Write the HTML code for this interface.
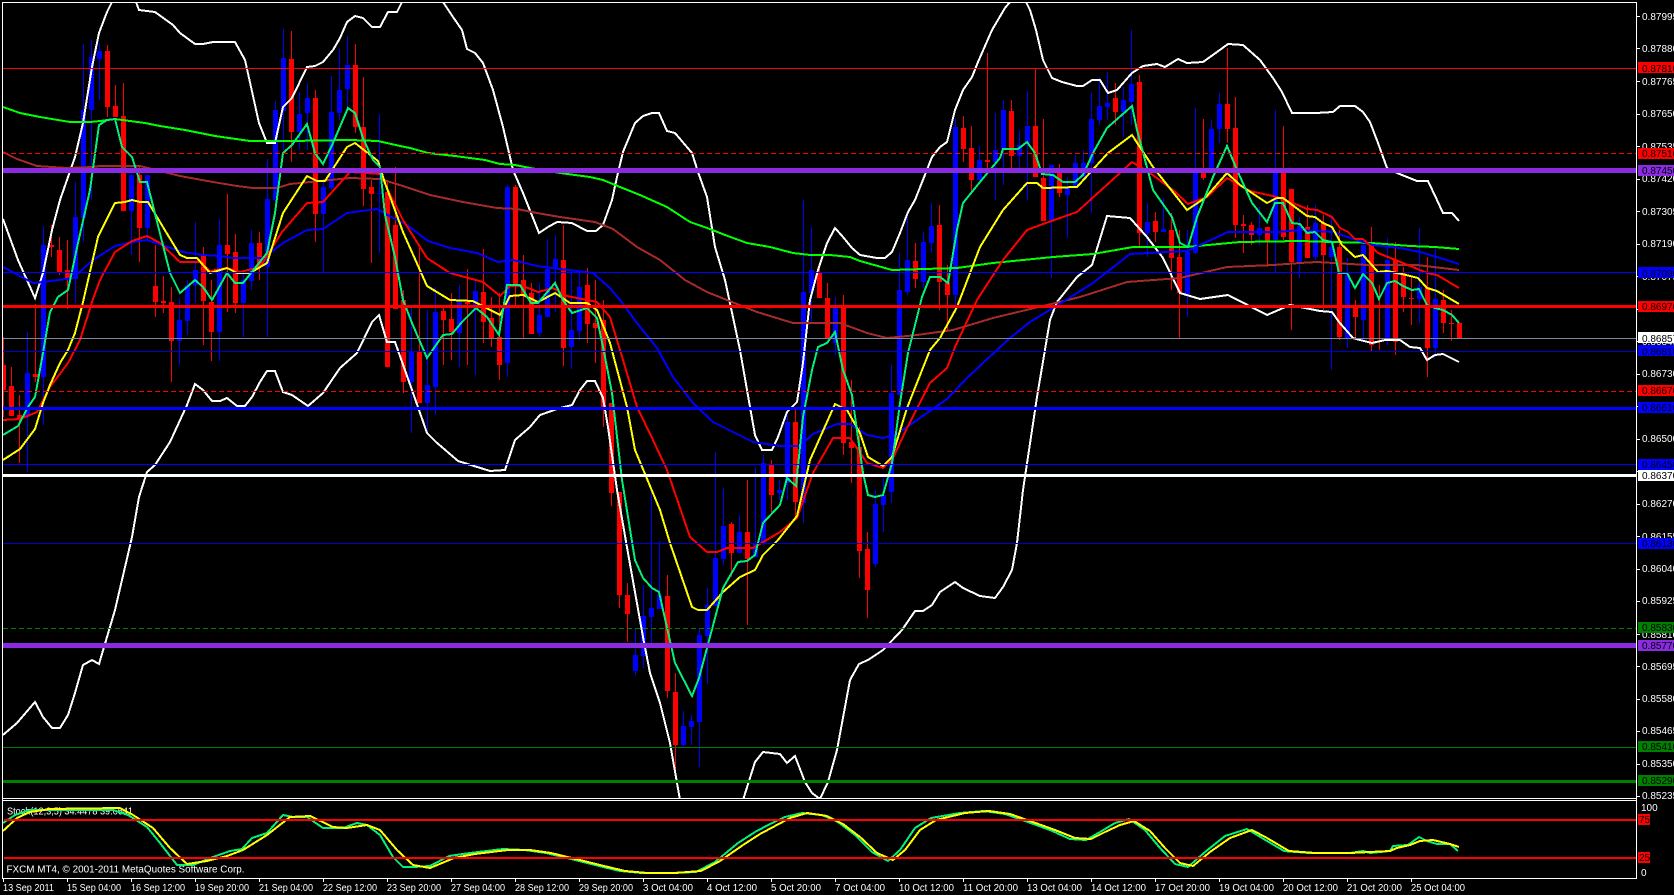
<!DOCTYPE html>
<html lang="en"><head><meta charset="utf-8"><title>FXCM MT4 chart</title>
<style>
html,body{margin:0;padding:0;background:#000;width:1674px;height:895px;overflow:hidden}
svg{display:block;position:absolute;left:0;top:0}
text{font-family:"Liberation Sans",sans-serif;font-size:10px}
.p{fill:#fff}.k{fill:#000}
.l{fill:none;stroke-width:2;stroke-linejoin:miter}
</style></head><body>
<svg width="1674" height="895" viewBox="0 0 1674 895" xmlns="http://www.w3.org/2000/svg">
<defs><clipPath id="m"><rect x="3" y="3" width="1633" height="795"/></clipPath>
<clipPath id="s"><rect x="3" y="801" width="1633" height="77"/></clipPath></defs>
<rect width="1674" height="895" fill="#000"/>
<g clip-path="url(#m)" shape-rendering="crispEdges">
<!-- red wicks -->
<path fill="none" stroke="#f00" stroke-width="1" d="M3.5 337V417M11.5 367V416M19.5 395V463M35.5 304V382M51.5 225V257M59.5 237V275M67.5 240V309M107.5 45V117M115.5 85V117M123.5 83V211M139.5 167V262M155.5 245V317M163.5 276V313M171.5 287V382M203.5 247V345M211.5 280V361M227.5 194V312M235.5 234V313M259.5 232V280M291.5 31V162M315.5 90V242M355.5 44V133M363.5 77V206M371.5 180V263M387.5 180V367M395.5 167V309M403.5 290V393M419.5 248V403M443.5 307V365M451.5 293V360M467.5 269V365M483.5 249V343M491.5 297V347M499.5 293V380M515.5 185V308M523.5 255V338M531.5 283V334M563.5 225V366M587.5 268V343M595.5 280V363M603.5 300V427M611.5 403V506M619.5 492V608M627.5 583V642M667.5 575V698M675.5 673V772M731.5 522V577M747.5 480V625M771.5 460V513M795.5 408V520M819.5 267V298M827.5 283V338M843.5 295V455M851.5 380V483M859.5 427V578M867.5 532V618M915.5 243V288M939.5 205V310M947.5 265V330M963.5 116V162M971.5 126V193M987.5 53V170M1011.5 100V168M1035.5 68V177M1043.5 119V221M1059.5 164V197M1115.5 83V125M1139.5 75V247M1155.5 212V242M1171.5 213V290M1179.5 230V338M1203.5 119V180M1227.5 48V143M1235.5 97V238M1243.5 215V253M1251.5 222V245M1267.5 227V267M1283.5 126V240M1291.5 189V330M1307.5 205V258M1323.5 215V310M1339.5 230V340M1355.5 300V340M1371.5 227V352M1379.5 285V350M1395.5 242V355M1403.5 267V312M1411.5 277V325M1427.5 257V377M1443.5 290V333M1451.5 310V341M1459.5 323V339"/>
<!-- blue wicks -->
<path fill="none" stroke="#00f" stroke-width="1" d="M27.5 332V472M43.5 226V425M75.5 182V303M83.5 44V242M91.5 40V200M99.5 43V100M131.5 167V255M147.5 175V240M179.5 298V365M187.5 280V335M195.5 222V303M219.5 219V361M243.5 270V337M251.5 230V290M267.5 159V337M275.5 101V215M283.5 29V150M299.5 92V150M307.5 83V150M323.5 180V272M331.5 76V190M339.5 49V120M347.5 36V110M379.5 114V253M411.5 305V433M427.5 310V430M435.5 287V415M459.5 285V367M475.5 280V375M507.5 185V377M539.5 283V337M547.5 239V317M555.5 235V312M571.5 273V369M579.5 273V340M635.5 628V675M643.5 585V668M651.5 488V648M659.5 541V609M683.5 711V747M691.5 715V745M699.5 628V767M707.5 588V684M715.5 452V606M723.5 488V565M739.5 515V553M755.5 467V557M763.5 455V545M779.5 480V500M787.5 410V500M803.5 200V523M811.5 227V322M835.5 297V355M875.5 490V567M883.5 478V532M891.5 365V503M899.5 253V395M907.5 217V295M923.5 232V288M931.5 203V253M955.5 118V313M979.5 146V180M995.5 113V200M1003.5 100V185M1019.5 130V168M1027.5 91V200M1051.5 165V278M1067.5 177V238M1075.5 155V187M1083.5 150V180M1091.5 93V213M1099.5 77V125M1107.5 72V120M1123.5 87V137M1131.5 30V125M1147.5 203V257M1163.5 198V232M1187.5 230V317M1195.5 108V254M1211.5 120V172M1219.5 93V143M1259.5 207V245M1275.5 110V272M1299.5 217V278M1315.5 205V260M1331.5 215V370M1347.5 258V348M1363.5 245V340M1387.5 238V345M1419.5 228V323M1435.5 247V357"/>
<!-- red bodies -->
<path fill="none" stroke="#f00" stroke-width="5" d="M3.5 365V390M11.5 386V416M19.5 415V418M35.5 374V377M51.5 245V247M59.5 250V273M67.5 270V278M107.5 51V107M115.5 106V117M123.5 116V211M139.5 175V228M155.5 286V302M163.5 301V303M171.5 302V341M203.5 254V301M211.5 302V332M227.5 245V254M235.5 252V303M259.5 243V267M291.5 59V132M315.5 98V214M355.5 65V127M363.5 127V189M371.5 187V194M387.5 192V367M395.5 225V309M403.5 300V382M419.5 352V403M443.5 311V320M451.5 319V332M467.5 302V304M483.5 292V322M491.5 318V338M499.5 337V365M515.5 187V285M523.5 280V295M531.5 293V334M563.5 260V348M587.5 285V324M595.5 323V328M603.5 320V407M611.5 403V493M619.5 492V595M627.5 595V614M667.5 596V691M675.5 692V745M731.5 524V553M747.5 532V559M771.5 465V495M795.5 422V502M819.5 273V298M827.5 298V338M843.5 308V443M851.5 442V448M859.5 447V551M867.5 549V590M915.5 261V279M939.5 225V282M947.5 282V295M963.5 128V149M971.5 148V180M987.5 160V162M1011.5 111V156M1035.5 126V177M1043.5 178V221M1059.5 173V193M1115.5 98V112M1139.5 82V233M1155.5 221V232M1171.5 230V258M1179.5 257V293M1203.5 168V178M1227.5 104V129M1235.5 128V225M1243.5 224V226M1251.5 225V235M1267.5 227V241M1283.5 173V237M1291.5 189V262M1307.5 227V258M1323.5 223V255M1339.5 247V337M1355.5 306V317M1371.5 245V345M1379.5 305V308M1395.5 260V342M1403.5 273V297M1411.5 298V299M1427.5 287V348M1443.5 300V323M1451.5 323V324M1459.5 323V339"/>
<!-- blue bodies -->
<path fill="none" stroke="#00f" stroke-width="5" d="M27.5 373V417M43.5 245V377M75.5 217V279M83.5 110V218M91.5 57V110M99.5 51V59M131.5 175V211M147.5 175V228M179.5 320V341M187.5 285V321M195.5 270V285M219.5 245V332M243.5 280V303M251.5 243V281M267.5 199V267M275.5 110V200M283.5 58V111M299.5 114V132M307.5 98V113M323.5 187V214M331.5 112V188M339.5 90V113M347.5 65V89M379.5 193V194M411.5 352V382M427.5 385V403M435.5 312V387M459.5 302V333M475.5 291V310M507.5 187V363M539.5 315V333M547.5 269V317M555.5 259V269M571.5 330V347M579.5 287V331M635.5 655V671M643.5 616V656M651.5 608V617M659.5 595V609M683.5 726V745M691.5 721V727M699.5 635V722M707.5 605V636M715.5 558V606M723.5 526V559M739.5 532V553M755.5 543V557M763.5 463V543M779.5 490V493M787.5 422V483M803.5 292V503M811.5 270V293M835.5 308V343M875.5 504V564M883.5 495V505M891.5 393V492M899.5 290V395M907.5 260V292M923.5 242V282M931.5 226V243M955.5 127V295M979.5 160V180M995.5 150V162M1003.5 110V150M1019.5 145V156M1027.5 126V143M1051.5 165V220M1067.5 187V195M1075.5 163V187M1083.5 163V177M1091.5 119V163M1099.5 106V120M1107.5 103V107M1123.5 100V112M1131.5 84V102M1147.5 222V233M1163.5 229V232M1187.5 252V294M1195.5 173V253M1211.5 129V170M1219.5 104V129M1259.5 228V235M1275.5 173V240M1299.5 226V262M1315.5 223V257M1331.5 247V257M1347.5 275V338M1363.5 245V320M1387.5 260V338M1419.5 287V299M1435.5 299V348"/>
<!-- white bollinger upper -->
<polyline class="l" stroke="#fff" points="3,219 18,260 35,298 43,273 52,230 60,200 75,157 83,123 92,67 99,33 107,12 112,2"/>
<polyline class="l" stroke="#fff" points="136,2 139,10 155,12 173,25 180,33 195,44 203,44 213,42 235,42 245,60 259,123 267,143 275,143 283,107 292,98 307,67 315,66 323,62 333,50 340,38 347,22 355,16 363,18 372,27 380,27 388,12 397,12 402,2"/>
<polyline class="l" stroke="#fff" points="443,2 453,17 462,30 467,49 475,53 483,63 493,90 503,127 513,170 523,193 539,233 548,227 557,222 572,223 587,231 596,231 603,225 612,200 617,177 623,152 635,123 643,116 652,113 659,113 667,131 675,133 692,153 698,172 707,197 715,247 725,280 740,350 750,407 755,435 762,450 772,450 778,437 787,412 797,402 803,363 810,300 818,270 827,243 835,228 843,237 852,248 860,255 877,258 885,258 892,252 900,233 908,212 915,200 932,157 940,147 947,142 955,110 963,90 972,77 978,62 992,30 1005,8 1010,2"/>
<polyline class="l" stroke="#fff" points="1026,2 1030,10 1036,30 1043,60 1052,78 1062,82 1077,86 1083,86 1092,80 1100,80 1108,93 1117,90 1132,73 1143,66 1157,64 1165,67 1178,59 1187,63 1203,62 1217,52 1228,44 1243,45 1260,60 1273,78 1282,92 1292,113 1316,113 1333,112 1340,106 1355,106 1363,112 1370,122 1378,143 1387,168 1397,173 1407,177 1417,181 1428,181 1437,200 1443,213 1452,213 1459,221"/>
<!-- white bollinger lower -->
<polyline class="l" stroke="#fff" points="3,735 17,723 35,702 43,717 52,728 60,728 68,715 75,693 83,665 92,660 99,664 115,610 132,537 139,497 147,472 155,465 170,442 187,405 195,384 203,390 212,401 220,401 227,398 237,406 245,406 252,397 260,382 267,371 275,371 283,392 292,395 308,406 323,393 340,368 357,353 372,322 379,315 387,342 395,342 412,390 427,433 436,442 458,461 490,471 505,470 515,440 530,427 540,415 560,408 572,405 580,390 587,381 595,381 603,398 608,427 617,490 628,553 643,637 650,673 660,703 670,743 680,800"/>
<polyline class="l" stroke="#fff" points="743,800 755,762 763,752 780,754 787,763 795,756 805,782 812,793 820,799 828,782 837,750 850,680 859,664 868,660 883,650 902,630 915,611 923,611 932,605 940,592 955,582 963,588 980,596 995,598 1003,587 1012,570 1017,543 1023,490 1037,397 1050,320 1057,302 1077,277 1092,265 1107,216 1130,218 1147,237 1163,258 1180,293 1200,299 1228,295 1267,315 1290,305 1320,311 1332,312 1339,322 1353,338 1360,340 1372,343 1385,340 1400,340 1410,347 1420,348 1427,360 1435,355 1443,354 1459,362"/>
<!-- brown -->
<polyline class="l" stroke="#a52a2a" points="3,152 17,159 37,166 67,168 93,167 100,166 140,166 180,176 213,182 237,186 253,188 277,188 290,184 350,178 380,179 403,186 430,195 463,202 497,208 517,209 537,213 560,217 595,222 613,229 637,247 660,260 685,280 707,292 757,312 793,323 840,323 867,333 887,338 917,335 953,330 993,318 1047,305 1080,297 1127,282 1180,278 1227,267 1273,265 1300,263 1317,262 1367,265 1417,265 1433,267 1459,270"/>
<!-- lime 200 -->
<polyline class="l" stroke="#0f0" points="3,107 20,113 40,117 70,122 90,122 100,121 115,119 145,123 160,126 185,130 215,136 250,141 290,141 350,140 378,141 400,146 410,148 428,153 455,156 485,160 500,164 515,165 530,168 560,173 590,177 603,180 620,187 640,195 667,207 690,222 710,229 725,235 747,243 770,247 793,253 810,255 830,255 850,257 860,261 892,270 957,268 993,263 1053,257 1093,254 1133,247 1187,247 1240,242 1300,241 1333,242 1372,243 1410,246 1435,247 1459,249"/>
<!-- blue MA -->
<polyline class="l" stroke="#00f" points="3,267 33,283 43,282 73,278 93,260 115,246 133,242 147,240 183,252 203,255 220,256 233,258 263,258 283,243 307,230 323,229 347,213 377,209 393,218 407,225 428,241 450,248 477,253 498,262 513,260 537,266 560,269 577,271 593,273 610,288 620,300 637,323 657,348 673,377 693,403 713,422 753,442 780,446 800,446 813,434 837,424 850,424 867,435 883,438 897,434 927,413 947,399 967,378 983,363 1010,338 1030,322 1053,308 1093,283 1130,254 1187,251 1228,232 1277,232 1300,230 1333,232 1353,239 1373,245 1400,248 1420,252 1440,258 1459,264"/>
<!-- red MA -->
<polyline class="l" stroke="#f00" points="3,420 20,419 37,412 50,387 68,363 80,340 93,299 100,280 115,252 132,241 147,236 160,243 180,262 200,262 210,271 227,268 240,272 260,267 282,232 307,203 323,202 350,172 380,174 403,220 427,258 450,273 483,282 500,296 510,286 523,286 538,292 553,288 567,296 597,302 610,317 623,360 637,407 653,440 667,470 690,537 707,552 717,552 727,548 753,548 780,532 797,518 813,473 833,438 850,438 867,463 883,468 892,460 907,428 930,383 947,368 955,347 977,300 1003,260 1027,230 1043,224 1060,218 1077,212 1132,162 1150,173 1173,190 1188,204 1207,197 1227,178 1250,191 1277,197 1293,203 1307,209 1317,210 1332,217 1340,228 1348,232 1355,239 1363,239 1378,253 1403,263 1427,273 1437,275 1459,288"/>
<!-- yellow MA -->
<polyline class="l" stroke="#ff0" points="3,460 20,449 35,429 43,403 50,385 60,363 68,350 75,333 83,302 98,237 115,203 125,202 132,200 140,202 148,202 163,227 180,255 187,258 197,258 210,273 227,268 237,273 250,273 267,263 283,213 307,176 317,181 325,181 347,147 355,143 378,161 385,183 403,232 427,286 450,300 473,301 500,315 510,296 523,295 538,302 555,293 570,303 587,303 597,310 610,343 627,407 635,450 660,510 670,543 692,607 698,610 707,610 723,592 740,577 755,570 763,555 778,540 797,516 810,460 835,404 847,410 860,433 868,457 883,466 892,457 907,408 930,350 940,338 957,307 980,247 1003,210 1027,183 1037,183 1043,188 1077,187 1108,153 1132,135 1153,167 1187,210 1205,198 1227,173 1240,185 1267,203 1277,198 1283,198 1307,216 1315,217 1323,223 1332,227 1342,245 1355,257 1363,255 1378,272 1387,271 1402,274 1418,278 1427,288 1437,291 1459,304"/>
<!-- spring green MA -->
<polyline class="l" stroke="#00f07a" points="3,435 18,426 28,407 35,397 43,353 50,312 58,297 68,290 78,243 90,190 99,125 107,120 115,119 122,147 132,157 140,182 147,182 170,273 180,293 195,280 203,287 212,300 227,273 235,283 243,283 267,253 275,213 283,153 292,145 307,124 315,153 323,164 333,143 348,108 355,113 363,138 373,160 380,167 385,215 395,257 403,300 412,323 427,358 443,335 452,334 462,322 476,308 487,317 499,335 507,285 520,285 531,303 538,303 555,283 563,300 572,313 587,308 597,318 603,347 612,393 622,480 635,560 643,578 652,588 659,592 675,663 692,696 699,678 723,588 738,562 747,561 755,555 763,523 780,505 787,478 796,486 803,417 812,370 818,347 827,343 835,332 843,370 852,395 863,473 868,495 875,497 883,495 892,463 900,403 908,353 922,297 930,277 940,277 948,283 957,230 963,203 980,182 1000,158 1003,149 1018,149 1027,142 1035,153 1042,174 1053,175 1063,182 1075,182 1083,175 1093,153 1107,128 1132,106 1137,130 1153,190 1172,217 1180,243 1188,247 1197,217 1213,177 1227,146 1237,170 1252,203 1267,222 1275,203 1283,203 1292,223 1300,224 1307,233 1315,232 1323,240 1332,242 1339,273 1347,273 1355,288 1363,274 1372,283 1379,299 1387,283 1395,281 1403,286 1412,290 1419,289 1427,305 1435,308 1443,310 1452,315 1459,323"/>
<!-- horizontal objects -->
<rect x="3" y="68" width="1633" height="1" fill="#f00"/>
<path d="M3 153.5H1636" stroke="#f00" stroke-width="1" stroke-dasharray="5 3" fill="none"/>
<rect x="3" y="168" width="1633" height="5" fill="#8a2be2"/>
<rect x="3" y="272" width="1633" height="1" fill="#00f"/>
<rect x="3" y="305" width="1633" height="3" fill="#f00"/>
<rect x="3" y="338" width="1633" height="1" fill="#778899"/>
<rect x="3" y="351" width="1633" height="1" fill="#0000cd"/>
<path d="M3 391.5H1636" stroke="#f00" stroke-width="1" stroke-dasharray="5 3" fill="none"/>
<rect x="3" y="407" width="1633" height="3" fill="#00f"/>
<rect x="3" y="464" width="1633" height="1" fill="#00f"/>
<rect x="3" y="474" width="1633" height="3" fill="#fff"/>
<rect x="3" y="543" width="1633" height="1" fill="#0000cd"/>
<path d="M3 628.5H1636" stroke="#008000" stroke-width="1" stroke-dasharray="5 3" fill="none"/>
<rect x="3" y="643" width="1633" height="5" fill="#8a2be2"/>
<rect x="3" y="747" width="1633" height="1" fill="#007a00"/>
<rect x="3" y="780" width="1633" height="3" fill="#008000"/>
</g>
<!-- frames -->
<g shape-rendering="crispEdges" fill="#fff">
<rect x="2" y="2" width="1635" height="1"/>
<rect x="2" y="2" width="1" height="877"/>
<rect x="1636" y="2" width="1" height="877"/>
<rect x="2" y="798" width="1635" height="1"/>
<rect x="2" y="800" width="1635" height="1"/>
<rect x="2" y="878" width="1635" height="1"/>
<path d="M1637 16h3v1h-3zM1637 48h3v1h-3zM1637 81h3v1h-3zM1637 114h3v1h-3zM1637 146h3v1h-3zM1637 179h3v1h-3zM1637 211h3v1h-3zM1637 244h3v1h-3zM1637 276h3v1h-3zM1637 309h3v1h-3zM1637 341h3v1h-3zM1637 374h3v1h-3zM1637 406h3v1h-3zM1637 439h3v1h-3zM1637 471h3v1h-3zM1637 504h3v1h-3zM1637 536h3v1h-3zM1637 569h3v1h-3zM1637 601h3v1h-3zM1637 634h3v1h-3zM1637 666h3v1h-3zM1637 699h3v1h-3zM1637 731h3v1h-3zM1637 764h3v1h-3zM1637 796h3v1h-3z"/>
<path d="M3 879h1v3h-1zM67 879h1v3h-1zM131 879h1v3h-1zM195 879h1v3h-1zM259 879h1v3h-1zM323 879h1v3h-1zM387 879h1v3h-1zM451 879h1v3h-1zM515 879h1v3h-1zM579 879h1v3h-1zM643 879h1v3h-1zM707 879h1v3h-1zM771 879h1v3h-1zM835 879h1v3h-1zM899 879h1v3h-1zM963 879h1v3h-1zM1027 879h1v3h-1zM1091 879h1v3h-1zM1155 879h1v3h-1zM1219 879h1v3h-1zM1283 879h1v3h-1zM1347 879h1v3h-1zM1411 879h1v3h-1z"/>
</g>
<!-- price scale -->
<g class="p">
<text x="1642" y="20">0.87995</text><text x="1642" y="52">0.87880</text><text x="1642" y="85">0.87765</text><text x="1642" y="117">0.87650</text><text x="1642" y="150">0.87535</text><text x="1642" y="182">0.87420</text><text x="1642" y="215">0.87305</text><text x="1642" y="247">0.87190</text><text x="1642" y="280">0.87075</text><text x="1642" y="312">0.86960</text><text x="1642" y="345">0.86845</text><text x="1642" y="377">0.86730</text><text x="1642" y="410">0.86615</text><text x="1642" y="442">0.86500</text><text x="1642" y="475">0.86385</text><text x="1642" y="507">0.86270</text><text x="1642" y="540">0.86155</text><text x="1642" y="572">0.86040</text><text x="1642" y="604">0.85925</text><text x="1642" y="638">0.85810</text><text x="1642" y="670">0.85695</text><text x="1642" y="702">0.85580</text><text x="1642" y="734">0.85465</text><text x="1642" y="767">0.85350</text><text x="1642" y="799">0.85235</text>
</g>
<g shape-rendering="crispEdges">
<rect x="1638" y="62" width="36" height="11" fill="#f00"/><rect x="1638" y="148" width="36" height="11" fill="#f00"/><rect x="1638" y="165" width="36" height="11" fill="#8a2be2"/><rect x="1638" y="267" width="36" height="11" fill="#00f"/><rect x="1638" y="301" width="36" height="11" fill="#f00"/><rect x="1638" y="332" width="36" height="11" fill="#fff"/><rect x="1638" y="345" width="36" height="11" fill="#00f"/><rect x="1638" y="385" width="36" height="11" fill="#f00"/><rect x="1638" y="402" width="36" height="11" fill="#00f"/><rect x="1638" y="459" width="36" height="11" fill="#00f"/><rect x="1638" y="470" width="36" height="11" fill="#fff"/><rect x="1638" y="538" width="36" height="11" fill="#00f"/><rect x="1638" y="622" width="36" height="11" fill="#008000"/><rect x="1638" y="640" width="36" height="11" fill="#8a2be2"/><rect x="1638" y="741" width="36" height="11" fill="#008000"/><rect x="1638" y="775" width="36" height="11" fill="#008000"/>
<rect x="1638" y="814" width="12" height="11" fill="#f00"/><rect x="1638" y="852" width="12" height="11" fill="#f00"/>
</g>
<g class="k">
<text x="1642" y="72">0.87810</text><text x="1642" y="157">0.87510</text><text x="1642" y="174">0.87450</text><text x="1642" y="277">0.87090</text><text x="1642" y="310">0.86970</text><text x="1642" y="342">0.86857</text><text x="1642" y="355">0.86810</text><text x="1642" y="394">0.86670</text><text x="1642" y="411">0.86610</text><text x="1642" y="468">0.86450</text><text x="1642" y="479">0.86370</text><text x="1642" y="547">0.86130</text><text x="1642" y="631">0.85830</text><text x="1642" y="649">0.85770</text><text x="1642" y="750">0.85410</text><text x="1642" y="784">0.85290</text>
<text x="1639" y="823">75</text><text x="1639" y="861">25</text>
</g>
<text class="p" x="1641" y="811">100</text>
<text class="p" x="1641" y="876">0</text>
<!-- stochastic -->
<text class="p" x="7" y="814.5" textLength="126" lengthAdjust="spacingAndGlyphs">Stoch(12,3,5) 34.4478 39.6641</text>
<text class="p" x="6.5" y="872.5" textLength="238" lengthAdjust="spacingAndGlyphs">FXCM MT4, © 2001-2011 MetaQuotes Software Corp.</text>
<g clip-path="url(#s)" shape-rendering="crispEdges">
<polyline class="l" stroke="#00f07a" points="3,823 15,815 30,810 50,810 113,810 128,815 147,827 160,843 177,865 193,865 213,857 230,851 242,849 252,838 267,833 283,815 293,817 307,817 323,828 343,828 357,823 367,825 380,835 393,857 403,867 413,867 430,866 449,856 470,853 503,849 525,850 546,853 575,860 599,866 620,871 642,873 670,873 696,872 715,862 738,843 755,832 770,824 785,817 802,813 822,815 838,822 855,835 872,852 888,861 900,850 915,828 931,818 960,813 984,811 1005,814 1025,821 1050,830 1070,839 1086,840 1100,832 1115,823 1129,819 1145,830 1160,848 1175,864 1188,867 1205,852 1225,836 1247,829 1262,838 1284,851 1310,853 1350,853 1363,851 1370,853 1390,851 1393,846 1408,845 1419,837 1427,841 1437,844 1450,844 1458,851"/>
<polyline class="l" stroke="#ff0" points="3,831 17,818 30,812 50,809 120,808 133,815 153,828 170,848 187,864 207,861 227,856 243,850 267,835 290,817 310,816 333,827 347,828 367,825 380,830 397,850 413,865 430,868 454,858 475,854 508,850 530,850 551,853 580,860 604,866 625,871 647,873 675,873 701,871 720,861 743,845 760,834 775,826 790,818 807,813 827,816 843,824 860,837 877,853 893,860 905,850 920,830 936,820 965,813 989,811 1010,814 1030,821 1055,830 1075,838 1091,839 1105,832 1120,825 1134,821 1150,831 1165,848 1180,863 1193,866 1210,852 1230,838 1252,830 1267,838 1289,851 1315,853 1350,853 1390,851 1397,848 1410,845 1420,841 1433,840 1450,844 1459,847"/>
</g>
<g shape-rendering="crispEdges" fill="#f00"><rect x="4" y="819" width="1632" height="2"/><rect x="4" y="857" width="1632" height="2"/></g>
<!-- time scale -->
<g class="p">
<text x="3" y="891" textLength="51" lengthAdjust="spacingAndGlyphs">13 Sep 2011</text><text x="67" y="891" textLength="54" lengthAdjust="spacingAndGlyphs">15 Sep 04:00</text><text x="131" y="891" textLength="54" lengthAdjust="spacingAndGlyphs">16 Sep 12:00</text><text x="195" y="891" textLength="54" lengthAdjust="spacingAndGlyphs">19 Sep 20:00</text><text x="259" y="891" textLength="54" lengthAdjust="spacingAndGlyphs">21 Sep 04:00</text><text x="323" y="891" textLength="54" lengthAdjust="spacingAndGlyphs">22 Sep 12:00</text><text x="387" y="891" textLength="54" lengthAdjust="spacingAndGlyphs">23 Sep 20:00</text><text x="451" y="891" textLength="54" lengthAdjust="spacingAndGlyphs">27 Sep 04:00</text><text x="515" y="891" textLength="54" lengthAdjust="spacingAndGlyphs">28 Sep 12:00</text><text x="579" y="891" textLength="54" lengthAdjust="spacingAndGlyphs">29 Sep 20:00</text><text x="643" y="891" textLength="50" lengthAdjust="spacingAndGlyphs">3 Oct 04:00</text><text x="707" y="891" textLength="50" lengthAdjust="spacingAndGlyphs">4 Oct 12:00</text><text x="771" y="891" textLength="50" lengthAdjust="spacingAndGlyphs">5 Oct 20:00</text><text x="835" y="891" textLength="50" lengthAdjust="spacingAndGlyphs">7 Oct 04:00</text><text x="899" y="891" textLength="55" lengthAdjust="spacingAndGlyphs">10 Oct 12:00</text><text x="963" y="891" textLength="55" lengthAdjust="spacingAndGlyphs">11 Oct 20:00</text><text x="1027" y="891" textLength="55" lengthAdjust="spacingAndGlyphs">13 Oct 04:00</text><text x="1091" y="891" textLength="55" lengthAdjust="spacingAndGlyphs">14 Oct 12:00</text><text x="1155" y="891" textLength="55" lengthAdjust="spacingAndGlyphs">17 Oct 20:00</text><text x="1219" y="891" textLength="55" lengthAdjust="spacingAndGlyphs">19 Oct 04:00</text><text x="1283" y="891" textLength="55" lengthAdjust="spacingAndGlyphs">20 Oct 12:00</text><text x="1347" y="891" textLength="55" lengthAdjust="spacingAndGlyphs">21 Oct 20:00</text><text x="1411" y="891" textLength="54" lengthAdjust="spacingAndGlyphs">25 Oct 04:00</text>
</g>
</svg>
</body></html>
